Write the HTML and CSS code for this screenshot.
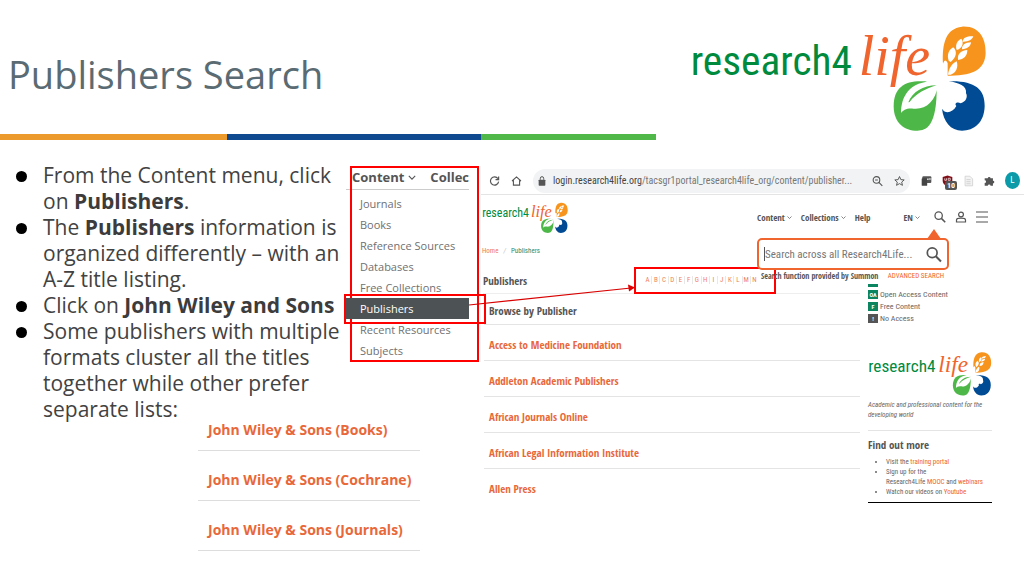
FILE: index.html
```html
<!DOCTYPE html>
<html lang="en">
<head>
<meta charset="utf-8">
<title>Publishers Search</title>
<link rel="stylesheet" href="styles.css">
</head>
<body>
<svg class="defs" aria-hidden="true">
  <symbol id="logo" viewBox="30 42 900 330">
    <text class="logo-research" x="32" y="194">research4</text>
    <text class="logo-life" x="536" y="194">life</text>
    <path fill="#f7941e" d="M803 160C798 149 794 148 789 161C786 100 797 56 846 50C900 47 918 88 917 130C915 178 880 199 803 197Z"/>
    <g fill="#fff">
      <path d="M804 194C806 176 816 160 830 154C836 170 828 190 812 194Z"/>
      <path d="M806 152C800 134 806 120 820 112C832 124 830 142 812 156Z"/>
      <path d="M834 148C832 132 842 122 862 120C862 138 852 148 834 150Z"/>
      <path d="M829 118C826 102 832 92 844 86C852 98 848 112 832 120Z"/>
      <path d="M846 116C846 104 856 98 873 97C872 110 862 116 846 118Z"/>
      <path d="M848 94C850 82 862 78 880 79C876 90 864 96 848 95Z"/>
    </g>
    <path fill="#4db848" d="M735 214C680 210 640 228 641 290C642 338 672 362 712 362C738 362 772 350 770 226Z"/>
    <path fill="#fff" d="M663 309C664 262 684 210 776 213L774 226C766 276 736 300 700 296C680 294 670 300 663 309Z"/>
    <path fill="#4db848" d="M685 277C698 246 728 226 770 226C738 236 708 250 689 276Z"/>
    <path fill="#004b93" d="M806 214C880 211 915 235 914 288C913 338 882 362 846 362C812 362 790 334 786 296C796 314 818 308 829 288C822 280 832 274 842 280C858 276 864 260 858 250C862 228 836 218 806 214Z"/>
  </symbol>
  <symbol id="chevron" viewBox="0 0 10 6"><path d="M1 1l4 4 4-4" fill="none" stroke="currentColor" stroke-width="1.4"/></symbol>
  <symbol id="search" viewBox="0 0 16 16"><circle cx="6.2" cy="6.2" r="4.9" fill="none" stroke="currentColor" stroke-width="1.7"/><path d="M9.8 9.8l5.2 5.2" stroke="currentColor" stroke-width="2"/></symbol>
</svg>

<header class="slide-header">
  <div class="title-block">
    <h1>Publishers Search</h1>
    <div class="stripe"><span class="s-orange"></span><span class="s-blue"></span><span class="s-green"></span></div>
  </div>
  <svg class="logo logo-large" role="img" aria-label="research4life"><use href="#logo"/></svg>
</header>

<main class="slide">
  <section class="left">
    <div class="intro">
      <ul class="bullets">
        <li>From the Content menu, click on <b>Publishers</b>.</li>
        <li>The <b>Publishers</b> information is organized differently – with an A-Z title listing.</li>
        <li>Click on <b>John Wiley and Sons</b></li>
        <li>Some publishers with multiple formats cluster all the titles together while other prefer separate lists:</li>
      </ul>
      <nav class="menu">
        <div class="menu-bar"><span>Content</span><svg class="chev"><use href="#chevron"/></svg><span>Collec</span></div>
        <a href="#">Journals</a>
        <a href="#">Books</a>
        <a href="#">Reference Sources</a>
        <a href="#">Databases</a>
        <a href="#">Free Collections</a>
        <a href="#" class="current">Publishers</a>
        <a href="#">Recent Resources</a>
        <a href="#">Subjects</a>
      </nav>
    </div>
    <ul class="wiley">
      <li><a href="#">John Wiley &amp; Sons (Books)</a></li>
      <li><a href="#">John Wiley &amp; Sons (Cochrane)</a></li>
      <li><a href="#">John Wiley &amp; Sons (Journals)</a></li>
    </ul>
  </section>

  <section class="browser">
    <div class="toolbar">
      <button aria-label="Reload"><svg viewBox="0 0 16 16"><path d="M13 4.500A6 6 0 1 0 14 9M14 1.500V6H9.500" fill="none" stroke="currentColor" stroke-width="1.700"/></svg></button>
      <button aria-label="Home"><svg viewBox="0 0 16 16"><path d="M1.500 8L8 2l6.500 6M3.500 7v7h9V7" fill="none" stroke="currentColor" stroke-width="1.600"/></svg></button>
      <div class="address">
        <svg class="lock" viewBox="0 0 12 16"><rect x="1" y="6" width="10" height="9" rx="1"/><path d="M3.500 6V4a2.500 2.500 0 0 1 5 0v2" fill="none" stroke="currentColor" stroke-width="1.500"/></svg>
        <span class="url"><b>login.research4life.org</b>/tacsgr1portal_research4life_org/content/publisher...</span>
        <svg viewBox="0 0 16 16"><g fill="none" stroke="currentColor" stroke-width="1.600"><circle cx="6.500" cy="6.500" r="4.800"/><path d="M10 10l5 5M4.500 6.500h4"/></g></svg>
        <svg class="star" viewBox="0 0 16 16"><path d="M8 1.500l2 4.500 4.800.4-3.600 3.200 1.100 4.700L8 11.800l-4.300 2.500 1.100-4.700L1.200 6.400 6 6z" fill="none" stroke="currentColor" stroke-width="1.400"/></svg>
      </div>
      <div class="extensions">
        <svg viewBox="0 0 16 16"><rect x="2" y="1" width="13" height="10" rx="1.500" fill="#555"/><rect x="1" y="4" width="8" height="11" rx="1" fill="#444"/><path d="M9 4.500h2v2H9zM12 4h2v2h-2z" fill="#eee"/></svg>
        <span class="shield"><svg viewBox="0 0 16 16"><path d="M8 0l7 2v6c0 4-3 6-7 8-4-2-7-4-7-8V2z" fill="#800f17"/><path d="M4 4v3h2.500V4M9 4h3v3H9z" fill="none" stroke="#fff" stroke-width="1"/></svg><span class="badge">10</span></span>
        <svg viewBox="0 0 16 16"><path d="M3 1h7l4 4v10H3z" fill="#f3f3f3" stroke="#c9c9c9"/><path d="M5 6h6M5 9h6M5 12h6" stroke="#c4c4c4"/></svg>
        <svg viewBox="0 0 16 16"><path d="M1 4h4.500a2 2 0 1 1 4 0H13v3.500a2 2 0 1 1 0 4V15H9.500a2 2 0 0 0-4 0H1v-4a2 2 0 0 0 0-4z" fill="#555"/></svg>
        <span class="avatar">L</span>
      </div>
    </div>

    <div class="site-header">
      <svg class="logo logo-small" role="img" aria-label="research4life"><use href="#logo"/></svg>
      <nav class="site-nav">
        <a href="#">Content<svg class="chev"><use href="#chevron"/></svg></a>
        <a href="#">Collections<svg class="chev"><use href="#chevron"/></svg></a>
        <a href="#">Help</a>
        <a href="#" class="lang">EN<svg class="chev"><use href="#chevron"/></svg></a>
        <button aria-label="Search"><svg><use href="#search"/></svg></button>
        <button aria-label="Account"><svg viewBox="0 0 12 12"><g fill="none" stroke="currentColor" stroke-width="1.200"><circle cx="6" cy="3.500" r="2.400"/><path d="M1.500 11V9c0-1.200 2-1.800 4.500-1.800s4.500.6 4.500 1.800v2z"/></g></svg></button>
        <button aria-label="Menu"><svg viewBox="0 0 12 12"><path d="M0 1h12M0 6h12M0 11h12" stroke="currentColor" stroke-width="1.200"/></svg></button>
      </nav>
      <form class="search-pop">
        <div class="search-box">
          <input type="text" aria-label="Search" placeholder="Search across all Research4Life...">
          <button type="button" aria-label="Go"><svg><use href="#search"/></svg></button>
        </div>
        <div class="search-foot"><b>Search function provided by Summon</b><a href="#">ADVANCED SEARCH</a></div>
      </form>
    </div>

    <div class="crumbs"><a href="#">Home</a><i>/</i><span>Publishers</span></div>

    <div class="columns">
      <div class="list">
        <div class="list-head">
          <h2>Publishers</h2>
          <nav class="az"><a href="#">A</a><a href="#">B</a><a href="#">C</a><a href="#">D</a><a href="#">E</a><a href="#">F</a><a href="#">G</a><a href="#">H</a><a href="#">I</a><a href="#">J</a><a href="#">K</a><a href="#">L</a><a href="#">M</a><a href="#">N</a></nav>
        </div>
        <h3>Browse by Publisher</h3>
        <ul class="publishers">
          <li><a href="#">Access to Medicine Foundation</a></li>
          <li><a href="#">Addleton Academic Publishers</a></li>
          <li><a href="#">African Journals Online</a></li>
          <li><a href="#">African Legal Information Institute</a></li>
          <li><a href="#">Allen Press</a></li>
        </ul>
      </div>
      <aside class="side">
        <ul class="keys">
          <li class="cut"><span class="key"></span></li>
          <li><span class="key">OA</span>Open Access Content</li>
          <li><span class="key">F</span>Free Content</li>
          <li><span class="key none">!</span>No Access</li>
        </ul>
        <svg class="logo logo-side" role="img" aria-label="research4life"><use href="#logo"/></svg>
        <p class="tagline">Academic and professional content for the developing world</p>
        <h4>Find out more</h4>
        <ul class="more">
          <li>Visit the <a href="#">training portal</a></li>
          <li>Sign up for the<br>Research4Life <a href="#">MOOC</a> and <a href="#">webinars</a></li>
          <li>Watch our videos on <a href="#">Youtube</a></li>
        </ul>
      </aside>
    </div>
    <svg class="arrow" viewBox="0 0 168 22" aria-hidden="true"><path d="M0 19L162 2" stroke="#d80000" stroke-width="1.200"/><path d="M166 1.500L159 -1.500 160 5.500z" fill="#e00000"/></svg>
  </section>
</main>
</body>
</html>
```
FILE: styles.css
```css
* { box-sizing: border-box; }
body { margin: 0; background: #fff; color: #444; font-family: "Open Sans", sans-serif; }
ul { list-style: none; margin: 0; padding: 0; }
h1, h2, h3, h4, p { margin: 0; }
a { color: inherit; text-decoration: none; }
button { border: 0; padding: 0; background: none; color: inherit; display: flex; }
svg { display: block; flex: none; }
.defs { position: absolute; width: 0; height: 0; }
.logo { overflow: visible; }
.logo-research { font-family: "Roboto Condensed", "Open Sans", sans-serif; font-size: 124px; fill: #008a3e; }
.logo-life { font-family: "Liberation Serif", serif; font-style: italic; font-size: 168px; fill: #f0642d; }

.slide-header { display: flex; align-items: flex-start; padding-right: 34px; }
.title-block { flex: 1; padding-top: 48px; }
h1 { padding-left: 8px; font-size: 38px; line-height: 52px; font-weight: 400; color: #5a6b73; }
.stripe { display: flex; height: 6px; margin-top: 34px; width: 95%; }
.s-orange { flex: 227; background: #ec9a2b; }
.s-blue { flex: 254; background: #0f4a91; }
.s-green { flex: 174; background: #50b848; }
.logo-large { width: 300px; height: 110px; margin-top: 24px; }

.slide { display: grid; grid-template-columns: minmax(0, 481fr) minmax(0, 543fr); align-items: start; padding-top: 22px; }
.intro { display: grid; grid-template-columns: minmax(0, 346fr) minmax(0, 135fr); align-items: start; }
.bullets { padding-left: 43px; font-size: 21px; line-height: 26px; color: #424242; }
.bullets li { position: relative; }
.bullets li::before { content: ""; position: absolute; left: -27px; top: 9px; width: 11px; height: 11px; border-radius: 50%; background: #000; }
.bullets b { color: #3c3c3c; }

.menu { position: relative; margin: 4px 12px 0 0; font-size: 11px; line-height: 21px; color: #707070; }
.menu::after { content: ""; position: absolute; left: 4px; right: -10px; top: 0; bottom: -1px; border: 2px solid #f00; }
.menu-bar { display: flex; align-items: center; height: 24px; margin-bottom: 3px; padding-left: 6px; border-bottom: 1px solid #ccc; font-size: 13px; font-weight: 700; color: #555; }
.menu-bar .chev { margin: 0 auto 0 4px; width: 8px; height: 5px; }
.menu a { display: block; padding-left: 14px; white-space: nowrap; }
.menu .current { position: relative; z-index: 1; background: #4d5254; color: #fff; }
.menu .current::after { content: ""; position: absolute; left: -2px; right: -17px; top: -4px; bottom: -5px; border: 2px solid #f00; }

.wiley { position: relative; width: 222px; margin: -2px 0 0 198px; font-size: 14px; line-height: 20px; font-weight: 700; color: #e8683a; }
.wiley li { padding: 19px 0 10px 10px; border-bottom: 1px solid #ddd; }
.wiley li:first-child { padding-top: 0; }

.browser { position: relative; padding-top: 5px; font-family: "Roboto Condensed", "Open Sans", sans-serif; }
.toolbar { display: flex; align-items: center; gap: 11px; height: 28px; padding: 0 4px 0 8px; border-bottom: 1px solid #e4e4e4; color: #555; }
.toolbar svg { width: 11px; height: 12px; }
.address { flex: 1; min-width: 0; display: flex; align-items: center; gap: 7px; height: 24px; padding: 0 5px; border-radius: 12px; background: #f1f3f4; }
.toolbar .lock { width: 8px; fill: #555; }
.toolbar .star { margin-left: 4px; }
.url { flex: 1; min-width: 0; font-size: 10px; color: #777; white-space: nowrap; }
.url b { font-weight: 400; color: #444; }
.extensions { display: flex; align-items: center; gap: 10px; }
.shield { position: relative; }
.badge { position: absolute; left: 3px; top: 6px; padding: 0 2px; border-radius: 2px; background: #555; color: #fff; font-size: 8px; line-height: 9px; font-weight: 700; }
.avatar { width: 15px; height: 17px; border-radius: 50%; background: #0a9aa8; color: #fff; font-size: 9px; line-height: 17px; text-align: center; }

.site-header { position: relative; display: flex; justify-content: space-between; align-items: flex-start; padding: 7px 36px 0 1px; }
.logo-small { width: 87px; height: 32px; }
.site-nav { display: flex; align-items: center; gap: 9px; height: 30px; font-family: "Open Sans Condensed", "Open Sans", sans-serif; font-size: 9px; font-weight: 700; color: #555; }
.site-nav a { display: flex; align-items: center; gap: 2px; }
.site-nav .chev { width: 5px; height: 3px; }
.site-nav .lang { margin: 0 5px 0 24px; }
.site-nav button svg { width: 12px; height: 12px; }
.search-pop { position: absolute; right: 75px; top: 43px; width: 192px; z-index: 2; }
.search-pop::before { content: ""; position: absolute; right: 8px; top: -9px; border: 7px solid transparent; border-top: 0; border-bottom: 10px solid #f0642d; }
.search-box { display: flex; align-items: center; height: 32px; padding: 0 5px; border: 2px solid #f0642d; border-radius: 5px; background: #fff; }
.search-box input { flex: 1; min-width: 0; border: 0; border-left: 1px solid #555; padding: 0; height: 14px; outline: 0; font: 11px "Roboto Condensed", "Open Sans", sans-serif; color: #777; }
.search-box input::placeholder { color: #777; }
.search-box button { color: #555; }
.search-box svg { width: 16px; height: 17px; }
.search-foot { display: flex; justify-content: space-between; padding: 0 5px 0 4px; font-size: 7px; line-height: 12px; white-space: nowrap; color: #555; }
.search-foot b { font-family: "Open Sans Condensed", "Open Sans", sans-serif; font-size: 8px; }
.search-foot a { color: #f0642d; }

.crumbs { display: flex; gap: 5px; padding: 11px 0 0 1px; font-size: 7px; line-height: 12px; color: #358a66; }
.crumbs a { color: #f0785a; }
.crumbs i { color: #bbb; }

.columns { display: grid; grid-template-columns: minmax(0, 379fr) minmax(0, 124fr); gap: 8px; padding-right: 32px; }
.list { color: #555; padding-top: 10px; }
.list-head { display: flex; align-items: center; justify-content: space-between; height: 27px; margin-left: 2px; padding-right: 84px; border-bottom: 1px solid #eee; }
h2, h3, h4, .publishers { font-family: "Open Sans Condensed", "Open Sans", sans-serif; font-size: 11px; font-weight: 700; }
.az { display: flex; align-items: center; flex: none; width: 142px; height: 27px; border: 2px solid #f00; padding: 0 16px 0 8px; font-size: 7px; line-height: 8px; color: #f08060; text-align: center; }
.az a { flex: 1; border-right: 1px solid #e8e8e8; }
.az a:last-child { border: 0; }
h3 { margin-left: 3px; padding: 4px 0 0 5px; line-height: 26px; border-bottom: 1px solid #e4e4e4; }
.publishers { margin-left: 3px; line-height: 31px; color: #e8683a; }
.publishers li { padding: 4px 0 0 5px; border-bottom: 1px solid #e4e4e4; }
.publishers li:last-child { border: 0; }

.side { padding-top: 10px; color: #666; }
.keys { padding-top: 17px; font-size: 8px; }
.keys li { display: flex; align-items: center; gap: 2px; height: 12px; }
.keys .cut { height: 4px; align-items: flex-start; }
.key { width: 10px; height: 9px; background: #0a8560; color: #fff; font-size: 6px; line-height: 9px; font-weight: 700; text-align: center; }
.cut .key { height: 3px; }
.key.none { background: #555; }
.logo-side { width: 125px; height: 46px; margin-top: 27px; }
.tagline { padding: 3px 0 10px; border-bottom: 1px solid #e4e4e4; font-size: 7px; line-height: 10px; font-style: italic; }
h4 { padding-top: 7px; line-height: 14px; color: #555; }
.more { padding: 5px 0 5px 18px; border-bottom: 1px solid #000; font-size: 7px; line-height: 10px; list-style: disc; white-space: nowrap; }
.more a { color: #f0642d; }
.arrow { position: absolute; left: -12px; top: 124px; width: 168px; height: 22px; overflow: visible; z-index: 3; }
```
